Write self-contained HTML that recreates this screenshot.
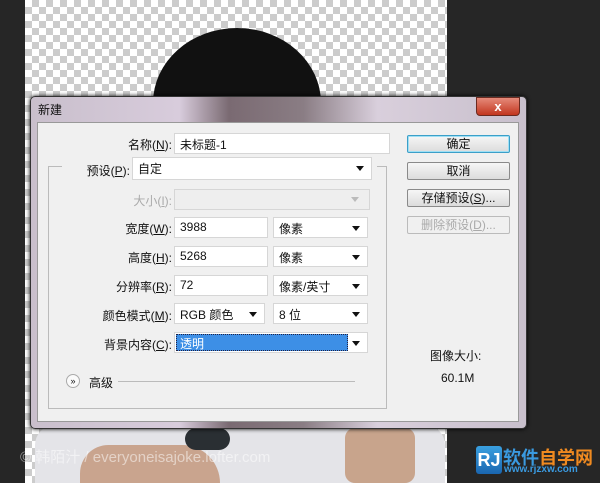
<!DOCTYPE html>
<html><head><meta charset="utf-8"><style>
*{margin:0;padding:0;box-sizing:border-box}
body{width:600px;height:483px;overflow:hidden;background:#262626;position:relative;font-family:"Liberation Sans","Noto Sans CJK SC",sans-serif;font-size:12px;color:#111}
.abs{position:absolute}
.checker{left:25px;top:0;width:422px;height:483px;background-color:#fff;background-image:linear-gradient(45deg,#ccc 25%,transparent 25%,transparent 75%,#ccc 75%),linear-gradient(45deg,#ccc 25%,transparent 25%,transparent 75%,#ccc 75%);background-size:14px 14px;background-position:0 0,7px 7px}
.inp{position:absolute;background:#fff;border:1px solid #d6d6d6;height:21px;padding:2px 5px;font-size:12px}
.sel::after{content:"";position:absolute;right:7px;top:8px;border-left:4px solid transparent;border-right:4px solid transparent;border-top:5px solid #111}
.lbl{position:absolute;text-align:right;width:130px;font-size:12px}
.btn{position:absolute;left:407px;width:103px;height:18px;border:1px solid #8a8a8a;border-radius:2px;background:linear-gradient(#f6f6f6,#dcdcdc);text-align:center;font-size:12px;line-height:16px}
</style></head><body>
<div class="abs checker"></div>
<div class="abs" style="left:153px;top:28px;width:168px;height:150px;border-radius:50% 50% 40% 40%;background:#111"></div>
<div class="abs" style="left:35px;top:425px;width:410px;height:58px;background:#e4e4e8;border-radius:20px 20px 0 0"></div>
<div class="abs" style="left:80px;top:445px;width:140px;height:38px;background:#c9a48e;border-radius:30px 40px 0 0"></div>
<div class="abs" style="left:345px;top:428px;width:70px;height:55px;background:#c8a48c;border-radius:10px"></div>
<div class="abs" style="left:185px;top:428px;width:45px;height:22px;background:#2a2f33;border-radius:12px"></div>
<div class="abs" style="left:20px;top:446px;font-size:15px;color:rgba(255,255,255,.5)">© 韩陌汁 / everyoneisajoke.lofter.com</div>
<div class="abs" style="left:30px;top:96px;width:497px;height:333px;border:1px solid #333;border-radius:5px;background:linear-gradient(90deg,#c9bfcc,#d8ccdc 30%,#7a6a72 40%,#8a7d84 55%,#d9cfdc 70%,#c8bfcc);box-shadow:0 0 4px #000"></div>
<div class="abs" style="left:38px;top:101px;font-size:12px">新建</div>
<div class="abs" style="left:476px;top:97px;width:44px;height:19px;border-radius:0 0 4px 4px;background:linear-gradient(#e58a7a,#c2361f);border:1px solid #6b2a20;color:#fff;text-align:center;font-weight:bold;font-size:13px;line-height:17px">x</div>
<div class="abs" style="left:37px;top:122px;width:482px;height:300px;background:#f0f0f0;border:1px solid #999"></div>
<div class="abs" style="left:48px;top:166px;width:339px;height:243px;border:1px solid #bbb"></div>
<div class="abs" style="left:62px;top:160px;width:315px;height:12px;background:#f0f0f0"></div>
<div class="lbl" style="left:42px;top:136px">名称(<u>N</u>):</div>
<div class="inp" style="left:174px;top:133px;width:216px">未标题-1</div>
<div class="lbl" style="left:0;top:162px">预设(<u>P</u>):</div>
<div class="inp sel" style="left:132px;top:157px;width:240px;height:23px">自定</div>
<div class="lbl" style="left:42px;top:192px;color:#aaa">大小(<u>I</u>):</div>
<div class="inp" style="left:174px;top:189px;width:196px;background:#eee"></div>
<div class="abs" style="left:351px;top:197px;border-left:4px solid transparent;border-right:4px solid transparent;border-top:5px solid #bbb"></div>
<div class="lbl" style="left:42px;top:220px">宽度(<u>W</u>):</div>
<div class="inp" style="left:174px;top:217px;width:94px">3988</div>
<div class="inp sel" style="left:273px;top:217px;width:95px">像素</div>
<div class="lbl" style="left:42px;top:249px">高度(<u>H</u>):</div>
<div class="inp" style="left:174px;top:246px;width:94px">5268</div>
<div class="inp sel" style="left:273px;top:246px;width:95px">像素</div>
<div class="lbl" style="left:42px;top:278px">分辨率(<u>R</u>):</div>
<div class="inp" style="left:174px;top:275px;width:94px">72</div>
<div class="inp sel" style="left:273px;top:275px;width:95px">像素/英寸</div>
<div class="lbl" style="left:42px;top:307px">颜色模式(<u>M</u>):</div>
<div class="inp sel" style="left:174px;top:303px;width:91px">RGB 颜色</div>
<div class="inp sel" style="left:273px;top:303px;width:95px">8 位</div>
<div class="lbl" style="left:42px;top:336px">背景内容(<u>C</u>):</div>
<div class="inp sel" style="left:174px;top:332px;width:194px;padding:1px"><div style="background:#3d8fe6;color:#fff;width:172px;height:17px;padding-left:3px;border:1px dotted #224">透明</div></div>
<div class="abs" style="left:66px;top:374px;width:14px;height:14px;border-radius:50%;border:1px solid #aaa;background:#fafafa;font-size:9px;text-align:center;line-height:12px">»</div>
<div class="abs" style="left:89px;top:374px">高级</div>
<div class="abs" style="left:118px;top:381px;width:237px;height:1px;background:#bbb"></div>
<div class="btn" style="top:135px;border-color:#3c9fc8;box-shadow:inset 0 0 0 1px #9fe0f5">确定</div>
<div class="btn" style="top:162px">取消</div>
<div class="btn" style="top:189px">存储预设(<u>S</u>)...</div>
<div class="btn" style="top:216px;color:#aaa;border-color:#bbb;background:#f0f0f0">删除预设(<u>D</u>)...</div>
<div class="abs" style="left:430px;top:347px">图像大小:</div>
<div class="abs" style="left:441px;top:371px">60.1M</div>
<div class="abs" style="left:476px;top:446px;width:26px;height:28px;background:linear-gradient(#3aa0e0,#1a66b0);border-radius:3px;color:#fff;font-weight:bold;font-size:18px;text-align:center;line-height:28px">RJ</div>
<div class="abs" style="left:503px;top:444px;font-size:18px;font-weight:bold;color:#3a9ae0">软件<span style="color:#f08a20">自学网</span></div>
<div class="abs" style="left:504px;top:464px;font-size:10px;font-weight:bold;color:#3a9ae0">www.rjzxw.com</div>
</body></html>
